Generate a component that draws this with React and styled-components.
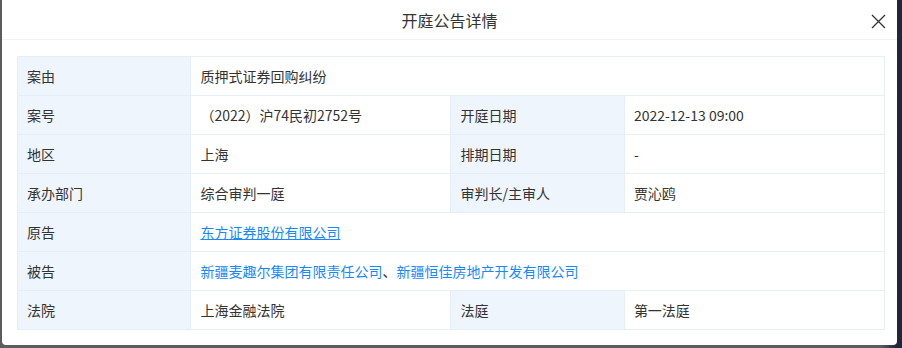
import { Fragment } from "react";
import styled, { createGlobalStyle } from "styled-components";

const GlobalStyle = createGlobalStyle`
  html, body {
    margin: 0;
    padding: 0;
    background: #5c5c5e;
  }
  body {
    font-family: "Noto Sans CJK SC", "Liberation Sans", sans-serif;
    color: #333;
  }
`;

const Backdrop = styled.div`
  width: 902px;
  height: 348px;
  display: flex;
  align-items: flex-start;
  padding-left: 2px;
  box-sizing: border-box;
  background: linear-gradient(to right, #5c5c5e 0, #5c5c5e 880px, #24243a 897px);
`;

const Dialog = styled.div`
  width: 895px;
  height: 345px;
  background: #fff;
  border-radius: 0 0 4px 4px;
  display: flex;
  flex-direction: column;
  overflow: hidden;
`;

const Header = styled.div`
  height: 40px;
  flex: none;
  display: flex;
  align-items: center;
  justify-content: center;
  position: relative;
  border-bottom: 1px solid #f0f2f5;
  box-sizing: border-box;
`;

const Title = styled.div`
  font-size: 16px;
  line-height: 20px;
  color: #333;
`;

const Close = styled.button`
  position: absolute;
  right: 11px;
  top: 13px;
  width: 16px;
  height: 16px;
  padding: 0;
  border: none;
  background: none;
  cursor: pointer;
  display: flex;
  align-items: center;
  justify-content: center;
`;

const Body = styled.div`
  padding: 16px 10px 14px 15px;
`;

const Table = styled.table`
  width: 868px;
  border-collapse: collapse;
  table-layout: fixed;
  font-size: 14px;
`;

const Cell = styled.td`
  height: 39px;
  padding: 0 9px;
  border: 1px solid #e6eef7;
  box-sizing: border-box;
  line-height: 20px;
  color: #333;
  background: ${(props) => (props.$label ? "#eef5fc" : "#fff")};
`;

const Link = styled.a`
  color: #1789ff;
  text-decoration: ${(props) => (props.$active ? "underline" : "none")};
  cursor: pointer;
`;

const rows = [
  [["案由", "质押式证券回购纠纷"]],
  [
    ["案号", "（2022）沪74民初2752号"],
    ["开庭日期", "2022-12-13 09:00"],
  ],
  [
    ["地区", "上海"],
    ["排期日期", "-"],
  ],
  [
    ["承办部门", "综合审判一庭"],
    ["审判长/主审人", "贾沁鸥"],
  ],
  [["原告", <Link $active>东方证券股份有限公司</Link>]],
  [
    [
      "被告",
      <>
        <Link>新疆麦趣尔集团有限责任公司</Link>、
        <Link>新疆恒佳房地产开发有限公司</Link>
      </>,
    ],
  ],
  [
    ["法院", "上海金融法院"],
    ["法庭", "第一法庭"],
  ],
];

const App = () => {
  return (
    <>
      <GlobalStyle />
      <Backdrop>
        <Dialog>
          <Header>
            <Title>开庭公告详情</Title>
            <Close aria-label="关闭">
              <svg width="15" height="15" viewBox="0 0 15 15">
                <path
                  d="M1 1 L14 14 M14 1 L1 14"
                  stroke="#333"
                  strokeWidth="1.3"
                  fill="none"
                />
              </svg>
            </Close>
          </Header>
          <Body>
            <Table>
              <colgroup>
                <col style={{ width: "20%" }} />
                <col style={{ width: "30%" }} />
                <col style={{ width: "20%" }} />
                <col style={{ width: "30%" }} />
              </colgroup>
              <tbody>
                {rows.map((pairs, i) => (
                  <tr key={i}>
                    {pairs.map(([label, value]) => (
                      <Fragment key={label}>
                        <Cell $label>{label}</Cell>
                        <Cell colSpan={pairs.length === 1 ? 3 : 1}>{value}</Cell>
                      </Fragment>
                    ))}
                  </tr>
                ))}
              </tbody>
            </Table>
          </Body>
        </Dialog>
      </Backdrop>
    </>
  );
};

export default App;
